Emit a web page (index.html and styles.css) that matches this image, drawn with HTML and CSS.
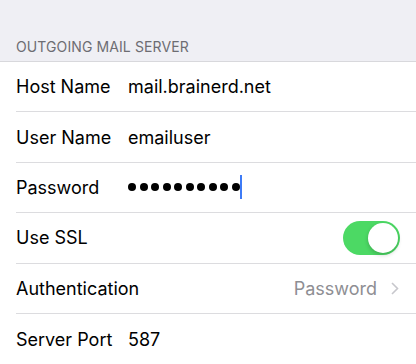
FILE: index.html
```html
<!DOCTYPE html>
<html lang="en">
<head>
    <meta charset="UTF-8">
    <meta name="viewport" content="width=device-width, initial-scale=1.0">
    <title>Outgoing Mail Server</title>
    <link rel="stylesheet" href="styles.css">
</head>
<body>
    <div class="section-header">OUTGOING MAIL SERVER</div>
    <div class="list">
        <div class="row">
            <span class="label">Host Name</span>
            <span class="value">mail.brainerd.net</span>
        </div>
        <div class="row">
            <span class="label">User Name</span>
            <span class="value">emailuser</span>
        </div>
        <div class="row">
            <span class="label">Password</span>
            <span class="value dots">
                <span class="dot"></span><span class="dot"></span><span class="dot"></span><span class="dot"></span><span class="dot"></span>
                <span class="dot"></span><span class="dot"></span><span class="dot"></span><span class="dot"></span><span class="dot"></span>
                <span class="caret"></span>
            </span>
        </div>
        <div class="row">
            <span class="label">Use SSL</span>
            <div class="toggle on"><div class="toggle-knob"></div></div>
        </div>
        <div class="row">
            <span class="label">Authentication</span>
            <span class="detail">Password</span>
            <svg class="chevron" width="8" height="13" viewBox="0 0 8 13">
                <path d="M1 1 L6.5 6.5 L1 12" fill="none" stroke="#c7c7cc" stroke-width="1.6"/>
            </svg>
        </div>
        <div class="row last">
            <span class="label">Server Port</span>
            <span class="value">587</span>
        </div>
    </div>
</body>
</html>
```

FILE: styles.css
```css
body {
    margin: 0;
    background-color: #fff;
    font-family: 'Inter', 'Liberation Sans', sans-serif;
    color: #000;
}

.section-header {
    background-color: #efeff4;
    color: #6d6d72;
    font-size: 14px;
    letter-spacing: 0.1px;
    height: 62px;
    box-sizing: border-box;
    padding: 0 16px 6px;
    display: flex;
    align-items: flex-end;
    border-bottom: 1px solid #d8d8dc;
}

.list {
    padding-left: 16px;
}

.row {
    display: flex;
    align-items: center;
    box-sizing: border-box;
    height: 50.4px;
    padding-right: 16px;
    border-bottom: 1px solid #dcdcdf;
    font-size: 18px;
}

.row.last {
    border-bottom: none;
}

.label {
    width: 112px;
    flex-shrink: 0;
}

.dots {
    display: flex;
    align-items: center;
    gap: 3.5px;
}

.dot {
    width: 8px;
    height: 8px;
    border-radius: 50%;
    background-color: #000;
}

.caret {
    width: 2px;
    height: 24px;
    background-color: #3e7bf6;
    margin-left: -3px;
}

.toggle {
    margin-left: auto;
    width: 57px;
    height: 34px;
    border-radius: 17px;
    background-color: #e5e5ea;
    position: relative;
}

.toggle.on {
    background-color: #4cd964;
}

.toggle-knob {
    position: absolute;
    top: 2px;
    right: 2px;
    width: 30px;
    height: 30px;
    border-radius: 50%;
    background-color: #fff;
    box-shadow: 0 2px 4px rgba(0, 0, 0, 0.2);
}

.detail {
    margin-left: auto;
    color: #8e8e93;
}

.chevron {
    margin-left: 14px;
    margin-right: 1px;
}
```
